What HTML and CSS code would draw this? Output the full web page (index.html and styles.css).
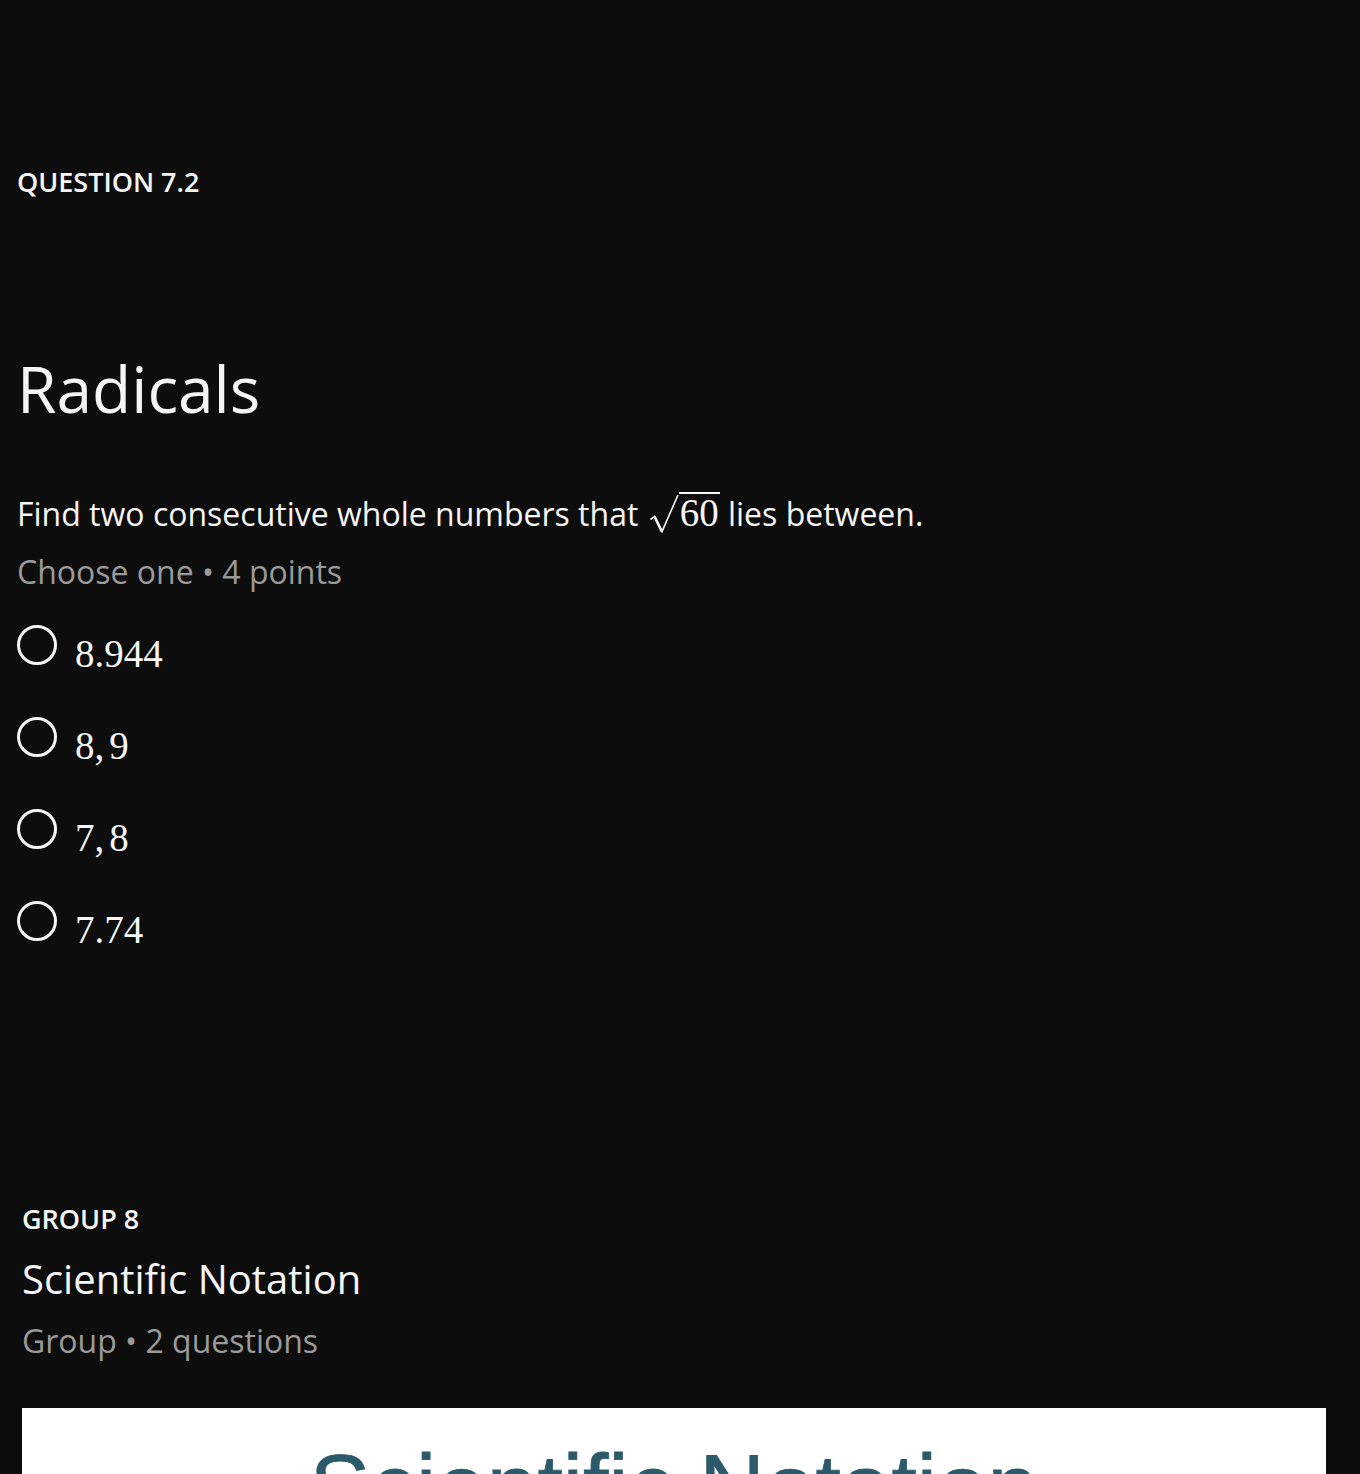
FILE: index.html
```html
<!DOCTYPE html>
<html lang="en">
<head>
<meta charset="utf-8">
<title>Radicals</title>
<link rel="stylesheet" href="styles.css">
</head>
<body>
<main class="page">
  <section class="question">
    <div class="eyebrow">QUESTION 7.2</div>
    <h1 class="title">Radicals</h1>
    <p class="prompt">Find two consecutive whole numbers that <span class="sqrt"><svg class="surd" viewBox="0 0 30 40" width="30" height="40" aria-hidden="true"><path d="M1.5 25.5 L5.5 22.5 L13 37.5 L29 1" fill="none" stroke="#f5f5f5" stroke-width="1.6" stroke-linejoin="miter"/><path d="M5.5 22.5 L12.8 37.5" fill="none" stroke="#f5f5f5" stroke-width="2.6"/></svg><span class="radicand">60</span></span> lies between.</p>
    <p class="meta">Choose one • 4 points</p>
    <ul class="options">
      <li class="option"><span class="radio"></span><span class="math">8.944</span></li>
      <li class="option"><span class="radio"></span><span class="math">8,<span class="thin"></span>9</span></li>
      <li class="option"><span class="radio"></span><span class="math">7,<span class="thin"></span>8</span></li>
      <li class="option"><span class="radio"></span><span class="math">7.74</span></li>
    </ul>
  </section>
  <section class="group">
    <div class="group-label">GROUP 8</div>
    <h2 class="group-title">Scientific Notation</h2>
    <p class="group-meta">Group • 2 questions</p>
    <div class="cover">
      <div class="cover-title">Scientific Notation</div>
    </div>
  </section>
</main>
</body>
</html>
```
FILE: styles.css
```css
html, body {
  margin: 0;
  padding: 0;
  background: #0d0d0d;
}
body {
  font-family: "Open Sans", "Noto Sans", sans-serif;
  color: #f5f5f5;
}
.page {
  display: flex;
  flex-direction: column;
}
.question {
  padding: 163px 0 0 17px;
  display: flex;
  flex-direction: column;
}
.eyebrow {
  font-size: 27px;
  line-height: 38px;
  font-weight: 600;
}
.title {
  margin: 144px 0 0;
  font-size: 64px;
  line-height: 87px;
  font-weight: 400;
}
.prompt {
  margin: 60px 0 0;
  font-size: 32px;
  line-height: 44px;
  height: 44px;
}
.sqrt {
  white-space: nowrap;
  margin-left: 2px;
}
.surd {
  display: inline-block;
  vertical-align: -8px;
}
.radicand {
  display: inline-block;
  font-family: "Liberation Serif", serif;
  font-size: 39px;
  line-height: 38px;
  border-top: 2px solid #f5f5f5;
  padding: 0 1px;
}
.meta {
  margin: 14px 0 0;
  font-size: 32px;
  line-height: 44px;
  color: #9a9a9a;
}
.options {
  list-style: none;
  margin: 31px 0 0;
  padding: 0;
  display: flex;
  flex-direction: column;
  gap: 40px;
}
.option {
  display: flex;
  align-items: flex-start;
  gap: 18px;
  height: 52px;
}
.radio {
  width: 40px;
  height: 40px;
  box-sizing: border-box;
  border: 3px solid #f5f5f5;
  border-radius: 50%;
  flex: none;
}
.math {
  padding-top: 6px;
  font-family: "Liberation Serif", serif;
  font-size: 39px;
  line-height: 46px;
}
.thin {
  display: inline-block;
  width: 5px;
}
.group {
  margin-top: 248px;
  padding: 0 34px 0 22px;
  display: flex;
  flex-direction: column;
}
.group-label {
  font-size: 27px;
  line-height: 35px;
  font-weight: 600;
}
.group-title {
  margin: 18px 0 0;
  font-size: 40px;
  line-height: 50px;
  font-weight: 400;
}
.group-meta {
  margin: 15px 0 0;
  font-size: 32px;
  line-height: 44px;
  color: #9a9a9a;
}
.cover {
  margin-top: 45px;
  background: #ffffff;
  height: 300px;
  padding-top: 27px;
  box-sizing: border-box;
}
.cover-title {
  text-align: center;
  font-family: "Liberation Sans", Arial, sans-serif;
  font-size: 91px;
  color: #2c5a6b;
  -webkit-text-stroke: 0.8px #2c5a6b;
}
```
